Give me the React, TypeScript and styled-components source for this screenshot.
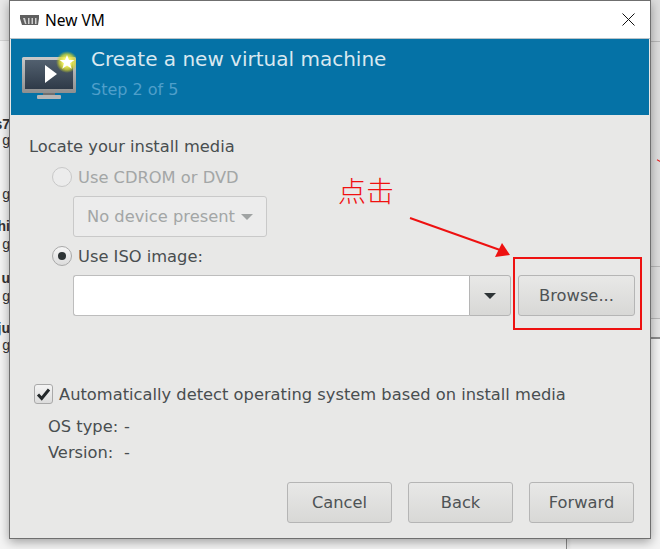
import styled, { createGlobalStyle } from "styled-components";

const GlobalStyle = createGlobalStyle`
  html, body {
    margin: 0;
    padding: 0;
    background: #ffffff;
  }
  * {
    box-sizing: border-box;
  }
`;

const Page = styled.div`
  position: relative;
  width: 660px;
  height: 549px;
  overflow: hidden;
  background: #f4f4f4;
  font-family: "DejaVu Sans", sans-serif;
`;

/* the window behind the dialog, only its edges show */
const BackTopLeft = styled.div`
  position: absolute;
  left: 0;
  top: 0;
  width: 10px;
  height: 41px;
  background: #e9e9e9;
  border-bottom: 1px solid #d4d4d4;
`;

const BackRight = styled.div`
  position: absolute;
  left: 650px;
  top: 0;
  width: 10px;
  height: 339px;
  background: #dedede;
  border-bottom: 2px solid #8c8c8c;
`;

const BackRightRule = styled.div<{ $top: number }>`
  position: absolute;
  left: 650px;
  right: 0;
  top: ${(props) => props.$top}px;
  height: 1px;
  background: #b8b8b8;
`;

const BackRightCell = styled.div`
  position: absolute;
  left: 650px;
  right: 0;
  top: 319px;
  height: 18px;
  background: #e6e6e6;
`;

const BackBottomLine = styled.div`
  position: absolute;
  left: 566px;
  top: 530px;
  width: 1px;
  height: 19px;
  background: #8a8a8a;
  box-shadow: 2px 0 3px rgba(0, 0, 0, 0.18);
`;

const BackText = styled.span<{ $top: number; $bold?: boolean }>`
  position: absolute;
  right: 650px;
  top: ${(props) => props.$top}px;
  font-family: "Liberation Sans", sans-serif;
  font-size: 14px;
  line-height: 16px;
  font-weight: ${(props) => (props.$bold ? 700 : 400)};
  color: #333333;
  white-space: nowrap;
`;

const BackMark = styled.div`
  position: absolute;
  left: 656px;
  top: 160px;
  width: 4px;
  height: 4px;
  border-top: 1px solid #ee2222;
  transform: rotate(30deg);
`;

const Dialog = styled.div`
  position: absolute;
  left: 9px;
  top: 0;
  width: 642px;
  height: 539px;
  display: flex;
  flex-direction: column;
  background: #e8e8e7;
  border: 1px solid #6f6f6f;
  box-shadow: 0 3px 10px rgba(0, 0, 0, 0.35);
`;

const TitleBar = styled.div`
  height: 38px;
  flex: none;
  display: flex;
  align-items: center;
  padding: 0 15px 0 10px;
  gap: 6px;
  background: #ffffff;
  border-bottom: 1px solid #b9c3c9;
`;

const TitleText = styled.span`
  flex: 1;
  font-family: "Noto Sans", sans-serif;
  font-size: 15.500px;
  color: #000000;
`;

const Banner = styled.div`
  height: 76px;
  flex: none;
  margin: 0 1px;
  display: flex;
  align-items: flex-start;
  gap: 15px;
  padding: 4px 0 0 9px;
  background: #0572a6;
`;

const BannerText = styled.div`
  display: flex;
  flex-direction: column;
  padding-top: 3px;
`;

const BannerTitle = styled.div`
  font-size: 20px;
  line-height: 26px;
  color: #d9e8f0;
`;

const BannerStep = styled.div`
  margin-top: 8px;
  font-size: 16px;
  line-height: 20px;
  color: #4f9fca;
`;

const Body = styled.div`
  flex: 1;
  display: flex;
  flex-direction: column;
  padding: 21px 15px 14px 19px;
  font-size: 16.300px;
  color: #494e50;
`;

const Label = styled.div`
  height: 20px;
  line-height: 22px;
  white-space: nowrap;
`;

const MediaOptions = styled.div`
  margin: 11px 0 0 23px;
  display: flex;
  flex-direction: column;
`;

const RadioRow = styled.div<{ $disabled?: boolean }>`
  height: 20px;
  display: flex;
  align-items: center;
  gap: 6px;
  color: ${(props) => (props.$disabled ? "#a3a6a6" : "#494e50")};
`;

const RadioLabel = styled.span`
  line-height: 20px;
  margin-top: 2px;
`;

const RadioDot = styled.span<{ $disabled?: boolean }>`
  width: 20px;
  height: 20px;
  flex: none;
  display: flex;
  align-items: center;
  justify-content: center;
  border-radius: 50%;
  border: 1px solid ${(props) => (props.$disabled ? "#c8c8c8" : "#a9a9a9")};
  background: ${(props) =>
    props.$disabled ? "#ececec" : "linear-gradient(#f6f6f6, #dcdcdc)"};
  &::after {
    content: "";
    display: ${(props) => (props.$disabled ? "none" : "block")};
    width: 8px;
    height: 8px;
    border-radius: 50%;
    background: #2e3436;
  }
`;

const Indented = styled.div`
  margin: 9px 0 9px 21px;
  display: flex;
  align-items: stretch;
`;

const DisabledCombo = styled.div`
  width: 194px;
  height: 41px;
  display: flex;
  align-items: center;
  gap: 6px;
  padding-left: 13px;
  border: 1px solid #c9c9c9;
  border-radius: 3px;
  background: #ececec;
  color: #a3a6a6;
  white-space: nowrap;
`;

const Caret = styled.span<{ $dark?: boolean }>`
  width: 0;
  height: 0;
  border-left: 6px solid transparent;
  border-right: 6px solid transparent;
  border-top: 6px solid ${(props) => (props.$dark ? "#2e3436" : "#a0a3a3")};
`;

const Entry = styled.div`
  width: 396px;
  height: 41px;
  flex: none;
  background: #ffffff;
  border: 1px solid #bdbdbd;
  border-right: none;
  border-radius: 3px 0 0 3px;
`;

const Button = styled.div<{ $width: number }>`
  width: ${(props) => props.$width}px;
  height: 41px;
  flex: none;
  display: flex;
  align-items: center;
  justify-content: center;
  border: 1px solid #b5b5b5;
  border-radius: 3px;
  background: linear-gradient(#e8e8e7, #d8d8d6);
  color: #4e5355;
`;

const ArrowButton = styled(Button)`
  border-radius: 0 3px 3px 0;
  margin-right: 7px;
`;

const AutoDetect = styled.div`
  margin: 0 0 0 5px;
  padding-top: 59px;
  display: flex;
  flex-direction: column;
`;

const CheckRow = styled.div`
  height: 20px;
  display: flex;
  align-items: center;
  gap: 6px;
  white-space: nowrap;
`;

const CheckBox = styled.span`
  width: 19px;
  height: 20px;
  flex: none;
  display: flex;
  align-items: center;
  justify-content: center;
  border: 1px solid #a9a9a9;
  border-radius: 3px;
  background: linear-gradient(#f4f4f4, #dcdcdc);
`;

const OsInfo = styled.div`
  margin: 12px 0 0 14px;
  display: grid;
  grid-template-columns: 76px auto;
  grid-auto-rows: 20px;
  row-gap: 6px;
  line-height: 22px;
`;

const Footer = styled.div`
  margin: 20px 1px 0 0;
  display: flex;
  justify-content: flex-end;
  gap: 16px;
`;

const AnnotationText = styled.div`
  position: absolute;
  left: 338px;
  top: 171px;
  font-family: "Noto Sans CJK SC", sans-serif;
  font-size: 28px;
  line-height: 38px;
  font-weight: 300;
  color: #f01010;
`;

const AnnotationBox = styled.div`
  position: absolute;
  left: 513px;
  top: 257px;
  width: 129px;
  height: 73px;
  border: 2px solid #ee1111;
`;

const AnnotationArrow = styled.svg`
  position: absolute;
  left: 400px;
  top: 210px;
`;

function AppGlyph() {
  return (
    <svg width="19" height="10" viewBox="0 0 19 10">
      <path d="M0 0h19v3.500l-1 6.500H2L0 3.500z" fill="#5f5f5f" />
      <path d="M3 3l2 6h1.500L5 3zM8 3v6h1.500V3zM11.500 3v6H13V3zM15 3v6h1.500V3z" fill="#cfcfcf" />
    </svg>
  );
}

function CloseGlyph() {
  return (
    <svg width="13" height="13" viewBox="0 0 13 13">
      <path d="M0.500 0.500l12 12M12.500 0.500l-12 12" stroke="#111111" strokeWidth="1" fill="none" />
    </svg>
  );
}

function MonitorIcon() {
  return (
    <svg width="56" height="58" viewBox="0 0 56 58">
      <defs>
        <linearGradient id="screen" x1="0" y1="0" x2="0" y2="1">
          <stop offset="0" stopColor="#52606f" />
          <stop offset="1" stopColor="#2f3a48" />
        </linearGradient>
        <linearGradient id="frame" x1="0" y1="0" x2="0" y2="1">
          <stop offset="0" stopColor="#c9c9c9" />
          <stop offset="1" stopColor="#8f8f8f" />
        </linearGradient>
        <radialGradient id="glow">
          <stop offset="0.35" stopColor="#f5f56a" />
          <stop offset="0.7" stopColor="#d9d930" stopOpacity="0.75" />
          <stop offset="1" stopColor="#b8c820" stopOpacity="0" />
        </radialGradient>
      </defs>
      <rect x="2" y="14" width="54" height="36" rx="1.500" fill="url(#frame)" />
      <rect x="5" y="17" width="48" height="29" fill="url(#screen)" />
      <path d="M23 50h12v3H23z" fill="#6f6f6f" />
      <rect x="17" y="52" width="24" height="4" rx="1" fill="#b5b5b5" />
      <path d="M25 22v18l12-9z" fill="#ffffff" />
      <circle cx="47" cy="19" r="11" fill="url(#glow)" />
      <path
        d="M47 12l2 5h5.500l-4.500 3.300 1.700 5.400L47 22.500l-4.700 3.200 1.700-5.400L39.500 17H45z"
        fill="#ffffff"
      />
    </svg>
  );
}

function CheckMark() {
  return (
    <svg width="15" height="15" viewBox="0 0 15 15">
      <path d="M2 7.500l3.700 4L13 2.500" stroke="#23282a" strokeWidth="3" fill="none" />
    </svg>
  );
}

function App() {
  return (
    <>
      <GlobalStyle />
      <Page>
        <BackTopLeft />
        <BackRight />
        <BackRightCell />
        <BackRightRule $top={41} />
        <BackRightRule $top={266} />
        <BackRightRule $top={318} />
        <BackBottomLine />
        <BackMark />
        <BackText $top={116} $bold>s7</BackText>
        <BackText $top={132}>g</BackText>
        <BackText $top={186}>g</BackText>
        <BackText $top={218} $bold>hi</BackText>
        <BackText $top={236}>g</BackText>
        <BackText $top={270} $bold>u</BackText>
        <BackText $top={288}>g</BackText>
        <BackText $top={320} $bold>ju</BackText>
        <BackText $top={337}>g</BackText>
        <Dialog>
          <TitleBar>
            <AppGlyph />
            <TitleText>New VM</TitleText>
            <CloseGlyph />
          </TitleBar>
          <Banner>
            <MonitorIcon />
            <BannerText>
              <BannerTitle>Create a new virtual machine</BannerTitle>
              <BannerStep>Step 2 of 5</BannerStep>
            </BannerText>
          </Banner>
          <Body>
            <Label>Locate your install media</Label>
            <MediaOptions>
              <RadioRow $disabled>
                <RadioDot $disabled />
                <RadioLabel>Use CDROM or DVD</RadioLabel>
              </RadioRow>
              <Indented>
                <DisabledCombo>
                  No device present
                  <Caret />
                </DisabledCombo>
              </Indented>
              <RadioRow>
                <RadioDot />
                <RadioLabel>Use ISO image:</RadioLabel>
              </RadioRow>
              <Indented>
                <Entry />
                <ArrowButton $width={42}>
                  <Caret $dark />
                </ArrowButton>
                <Button $width={117}>Browse...</Button>
              </Indented>
            </MediaOptions>
            <AutoDetect>
              <CheckRow>
                <CheckBox>
                  <CheckMark />
                </CheckBox>
                Automatically detect operating system based on install media
              </CheckRow>
              <OsInfo>
                <span>OS type:</span>
                <span>-</span>
                <span>Version:</span>
                <span>-</span>
              </OsInfo>
            </AutoDetect>
            <Footer>
              <Button $width={105}>Cancel</Button>
              <Button $width={105}>Back</Button>
              <Button $width={105}>Forward</Button>
            </Footer>
          </Body>
        </Dialog>
        <AnnotationText>点击</AnnotationText>
        <AnnotationArrow width="120" height="55" viewBox="0 0 120 55">
          <path d="M10 8L100 40" stroke="#ee1111" strokeWidth="2" fill="none" />
          <path d="M102 33L95 47L110 45z" fill="#ee1111" />
        </AnnotationArrow>
        <AnnotationBox />
      </Page>
    </>
  );
}

export default App;
